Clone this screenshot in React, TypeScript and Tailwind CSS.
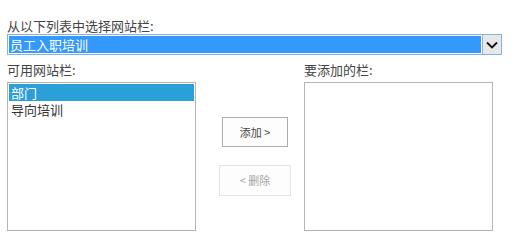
import React from 'react';

const font = { fontFamily: '"Noto Sans CJK SC", "Noto Sans", sans-serif' };

function ChevronDown() {
  return (
    <svg width="12" height="8" viewBox="0 0 12 8" fill="none">
      <path d="M1 1.5 L6 6.5 L11 1.5" stroke="#111" strokeWidth="1.8" />
    </svg>
  );
}

type ListBoxProps = {
  items: string[];
  selected?: number;
};

function ListBox({ items, selected }: ListBoxProps) {
  return (
    <div className="w-[189px] h-[149px] border border-[#b4b4b4] bg-white p-[1px]">
      {items.map((item, i) => (
        <div
          key={item}
          className={
            i === selected
              ? 'h-[17px] leading-[17px] px-[2px] bg-[#2a9fd8] text-white text-[13px] overflow-hidden'
              : 'h-[17px] leading-[17px] px-[2px] text-[#333] text-[13px] overflow-hidden'
          }
        >
          {item}
        </div>
      ))}
    </div>
  );
}

export default function App() {
  return (
    <div className="w-[517px] h-[240px] bg-white px-[7px] pt-[18px] text-[#444]" style={font}>
      <div className="text-[13px] leading-[16px]">从以下列表中选择网站栏:</div>
      <div className="w-[495px] h-[21px] flex border border-[#7eb4ea] bg-white">
        <div className="flex-1 m-[1px] bg-[#3399ff] text-white text-[13px] leading-[17px] px-[1px]">员工入职培训</div>
        <div className="w-[19px] flex items-center justify-center bg-[#e8e8e8] border-l border-[#adadad]">
          <ChevronDown />
        </div>
      </div>
      <div className="flex mt-[7px]">
        <div className="w-[189px]">
          <div className="text-[13px] leading-[16px] mb-[4px]">可用网站栏:</div>
          <ListBox items={['部门', '导向培训']} selected={0} />
        </div>
        <div className="w-[108px] pt-[55px]">
          <button className="ml-[26px] w-[66px] h-[30px] border border-[#adadad] bg-[#fdfdfd] text-[11px] text-[#444]">
            添加 &gt;
          </button>
          <button className="ml-[23px] mt-[18px] w-[72px] h-[31px] border border-[#e3e3e3] bg-[#fdfdfd] text-[11px] text-[#a6a6a6]">
            &lt; 删除
          </button>
        </div>
        <div className="w-[189px]">
          <div className="text-[13px] leading-[16px] mb-[4px]">要添加的栏:</div>
          <ListBox items={[]} />
        </div>
      </div>
    </div>
  );
}
